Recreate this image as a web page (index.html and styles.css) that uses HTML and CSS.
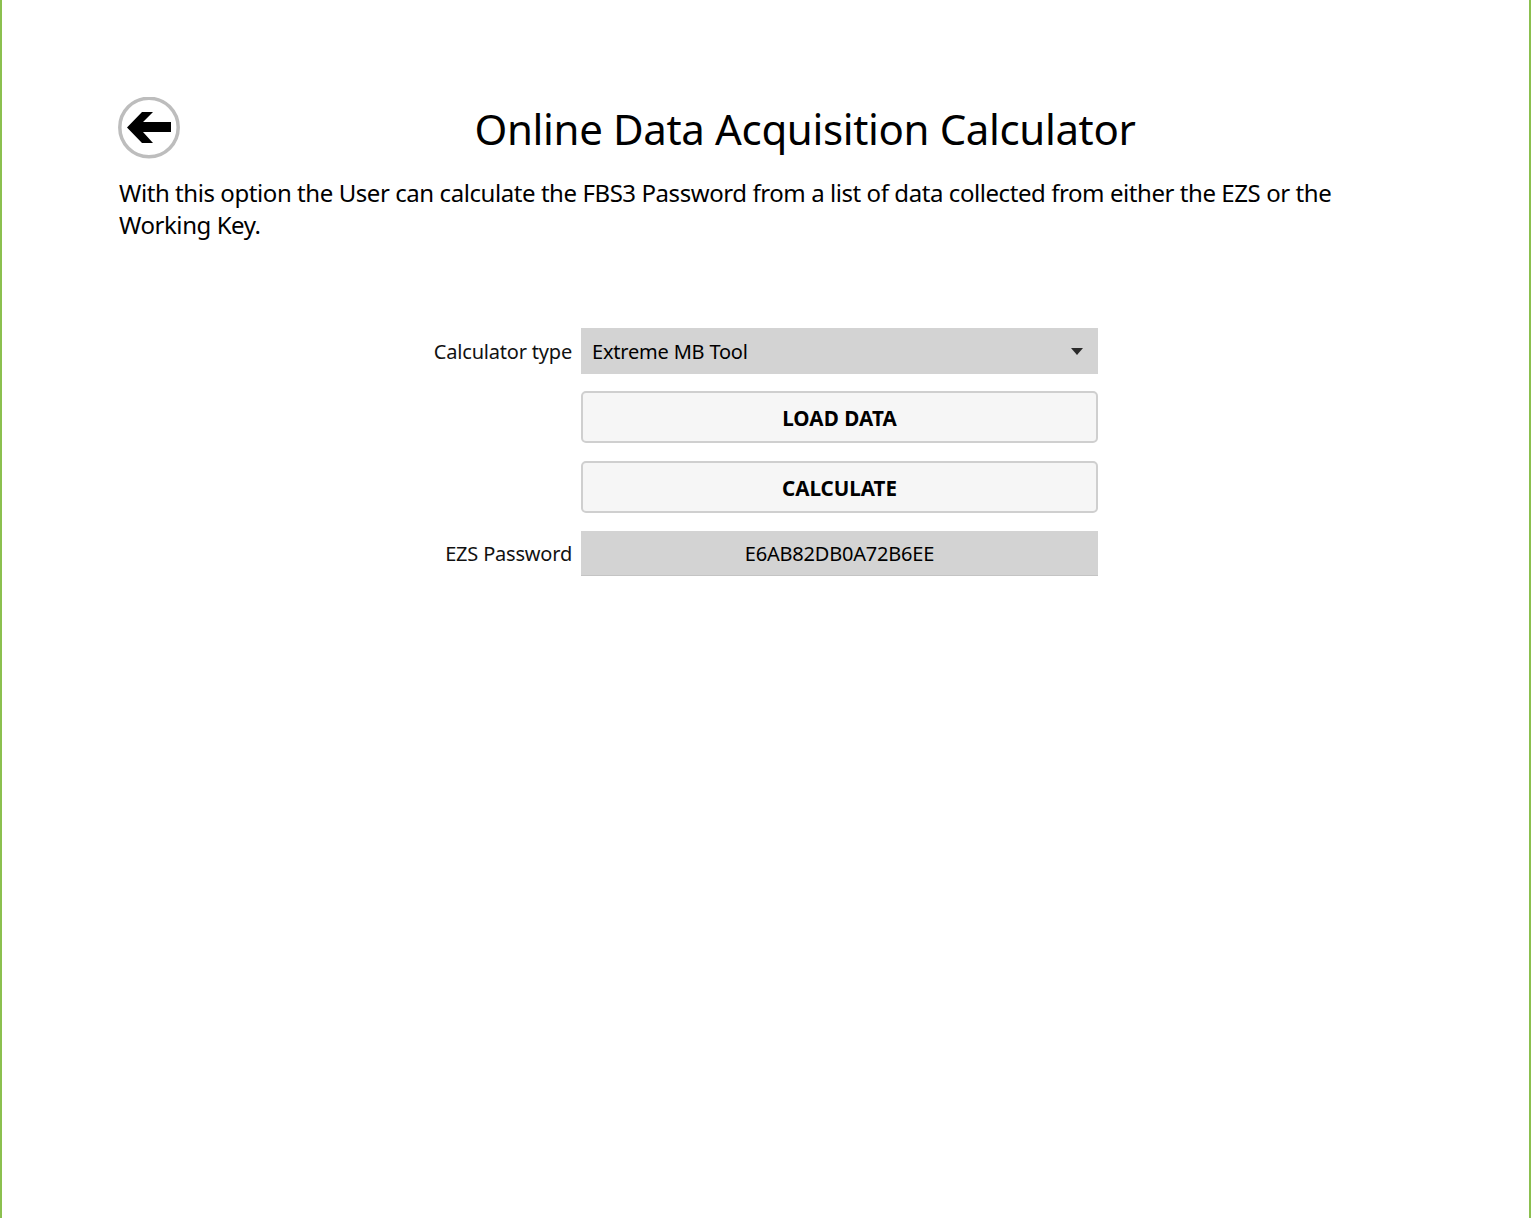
FILE: index.html
```html
<!DOCTYPE html>
<html lang="en">
<head>
<meta charset="utf-8">
<title>Online Data Acquisition Calculator</title>
<link rel="stylesheet" href="styles.css">
</head>
<body>
<main class="frame">
  <header class="header">
    <button class="back" type="button" aria-label="Back">
      <svg width="62" height="62" viewBox="0 0 62 62">
        <circle cx="31" cy="30.5" r="29.2" fill="#fff" stroke="#bdbdbd" stroke-width="3.5"/>
        <path d="M9 30.5 L24 15 H35 L25 25 H53 V35 H25 L35 46 H24 Z" fill="#000"/>
      </svg>
    </button>
    <h1 class="title">Online Data Acquisition Calculator</h1>
  </header>
  <p class="desc">With this option the User can calculate the FBS3 Password from a list of data collected from either the EZS or the Working Key.</p>
  <section class="form">
    <label class="label">Calculator type</label>
    <div class="select">
      <span>Extreme MB Tool</span>
      <svg class="caret" width="12" height="7" viewBox="0 0 12 7"><path d="M0 0H12L6 7Z" fill="#2b2b2b"/></svg>
    </div>
    <button class="btn btn-first" type="button">LOAD DATA</button>
    <button class="btn" type="button">CALCULATE</button>
    <label class="label label-last">EZS Password</label>
    <div class="output">E6AB82DB0A72B6EE</div>
  </section>
</main>
</body>
</html>
```
FILE: styles.css
```css
* { box-sizing: border-box; }
html, body { margin: 0; background: #fff; }
body { width: 1536px; height: 1218px; overflow: hidden; font-family: "Noto Sans", "Open Sans", sans-serif; color: #000; }
.frame {
  width: 1531px;
  height: 1218px;
  border-left: 2px solid #8bc04f;
  border-right: 2px solid #8bc04f;
  padding: 97px 0 0 116px;
}
.header { display: flex; align-items: flex-start; width: 1374px; height: 62px; }
.back { width: 62px; height: 62px; padding: 0; border: 0; background: none; flex: none; }
.back svg { display: block; }
.title {
  margin: 0;
  flex: 1;
  padding-right: 62px;
  text-align: center;
  font-weight: 400;
  font-size: 42px;
  line-height: 64px;
  letter-spacing: -0.36px;
}
.desc {
  margin: 18px 0 0 1px;
  width: 1240px;
  font-size: 24px;
  line-height: 32px;
  letter-spacing: -0.43px;
}
.form {
  display: grid;
  grid-template-columns: 200px 517px;
  column-gap: 9px;
  margin: 87px 0 0 254px;
  align-items: center;
}
.label { grid-column: 1; padding-top: 1px; text-align: right; font-size: 20px; line-height: 28px; color: #111; letter-spacing: -0.2px; }
.label-last { margin-top: 18px; }
.select, .output { grid-column: 2; background: #d3d3d3; font-size: 20px; letter-spacing: -0.2px; }
.select {
  height: 46px;
  display: flex;
  align-items: center;
  justify-content: space-between;
  padding: 0 15px 0 11px;
}
.output { height: 45px; display: flex; align-items: center; justify-content: center; border-bottom: 1px solid #c4c4c4; margin-top: 18px; }
.btn {
  grid-column: 2;
  height: 52px;
  margin-top: 18px;
  padding-top: 2px;
  background: #f6f6f6;
  border: 2px solid #cfcfcf;
  border-radius: 5px;
  font-family: inherit;
  font-size: 20.6px;
  font-weight: 700;
  color: #000;
}
.btn-first { margin-top: 17px; letter-spacing: 0.1px; }
```
